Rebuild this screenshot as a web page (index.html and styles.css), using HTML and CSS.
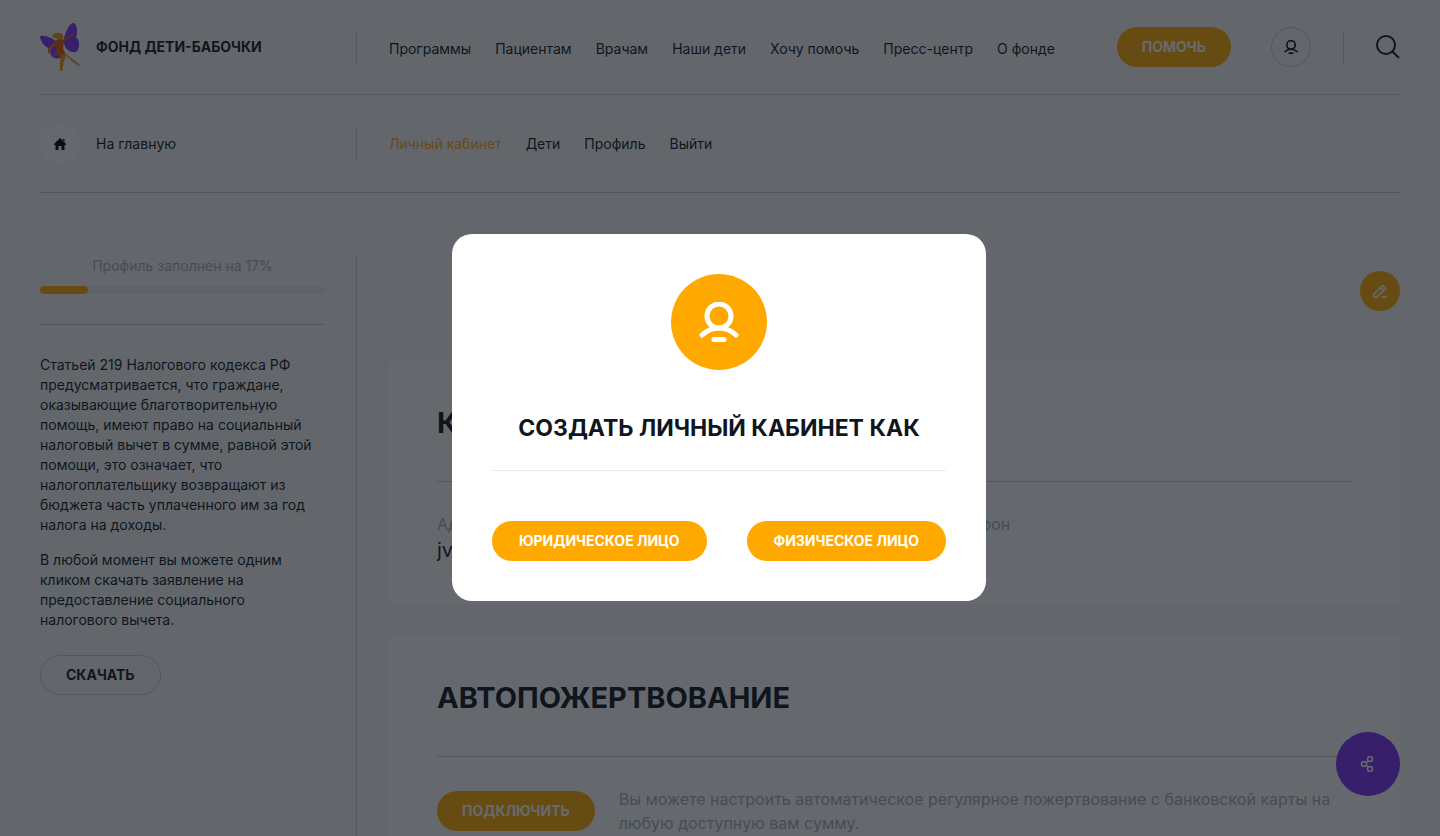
FILE: index.html
```html
<!DOCTYPE html>
<html lang="ru">
<head>
  <meta charset="UTF-8">
  <meta name="viewport" content="width=device-width, initial-scale=1.0">
  <title>Личный кабинет — Фонд Дети-бабочки</title>
  <link rel="stylesheet" href="styles.css">
</head>
<body>
  <!-- Shared user icon -->
  <svg class="sprite" aria-hidden="true">
    <symbol id="icon-user" viewBox="0 0 40 40">
      <circle cx="20" cy="14" r="12" />
      <path d="M3 33C13 23.500 27 23.500 37 33" />
      <path d="M15 37.500H25" />
    </symbol>
  </svg>

  <header class="header">
    <a href="#" class="logo">
      <svg class="logo-img" viewBox="0 0 120 144" aria-hidden="true">
        <path fill="#7f2ff3" d="M71 51C76 24 90 0 99 0C112 1 114 28 108 43C121 52 119 78 109 86C97 91 79 83 73 66Z" />
        <path fill="#7f2ff3" d="M0 40C11 34 40 45 51 59L29 76C14 75 0 52 0 40Z" />
        <path fill="#7f2ff3" d="M47 67C35 68 26 86 34 98C42 109 61 109 68 98L65 80Z" />
        <path fill="#e99a0b" d="M36 43C37 30 54 26 66 33C73 38 70 50 64 54L50 54C54 47 48 43 43 45Z" />
        <path fill="#e05c00" d="M46 53C54 49 66 50 72 56L69 75C70 82 76 87 77 95C66 100 54 99 42 98C42 90 52 84 50 76C48 72 42 69 40 66Z" />
        <path fill="none" stroke="#cc6510" stroke-width="6" stroke-linecap="round" stroke-linejoin="round" d="M67 55Q82 46 99 35M50 55Q39 65 28 76Q28 82 27 88" />
        <path fill="#e99a0b" d="M61 95L77 92Q98 108 120 125L117 129Q98 119 79 98C72 109 69 126 67 144H60C59 126 59 111 62 97Z" />
      </svg>
      <span class="logo-text">ФОНД ДЕТИ-БАБОЧКИ</span>
    </a>
    <nav class="nav nav-main">
      <a href="#">Программы</a>
      <a href="#">Пациентам</a>
      <a href="#">Врачам</a>
      <a href="#">Наши дети</a>
      <a href="#">Хочу помочь</a>
      <a href="#">Пресс-центр</a>
      <a href="#">О фонде</a>
    </nav>
    <div class="header-actions">
      <button type="button" class="btn">ПОМОЧЬ</button>
      <a href="#" class="user-link" aria-label="Личный кабинет">
        <svg class="user-icon"><use href="#icon-user" /></svg>
      </a>
      <div class="search">
        <button type="button" class="search-btn" aria-label="Поиск">
          <svg width="24" height="24" viewBox="0 0 24 24"><circle cx="10" cy="10" r="9" /><path d="M16.500 16.500L23 23" /></svg>
        </button>
      </div>
    </div>
  </header>

  <div class="subheader">
    <a href="#" class="home-link">
      <span class="home-icon">
        <svg width="12" height="12" viewBox="0 0 12 12"><path d="M6 0L12 6V7H10.500V12H7.500V8H4.500V12H1.500V7H0V6ZM8 1H10.500V4Z" /></svg>
      </span>
      На главную
    </a>
    <nav class="nav nav-account">
      <a href="#" class="active">Личный кабинет</a>
      <a href="#">Дети</a>
      <a href="#">Профиль</a>
      <a href="#">Выйти</a>
    </nav>
  </div>

  <div class="layout">
    <aside class="sidebar">
      <div class="profile">
        <label for="profileProgress">Профиль заполнен на 17%</label>
        <progress id="profileProgress" value="17" max="100"></progress>
      </div>
      <p>Статьей 219 Налогового кодекса РФ предусматривается, что граждане, оказывающие благотворительную помощь, имеют право на социальный налоговый вычет в сумме, равной этой помощи, это означает, что налогоплательщику возвращают из бюджета часть уплаченного им за год налога на доходы.</p>
      <p>В любой момент вы можете одним кликом скачать заявление на предоставление социального налогового вычета.</p>
      <button type="button" class="btn btn-outline">СКАЧАТЬ</button>
    </aside>

    <main class="content">
      <div class="content-top">
        <button type="button" class="edit-btn" aria-label="Редактировать">
          <svg width="14" height="14" viewBox="0 0 14 14"><path d="M1 13V10L9.500 1.500L12.500 4.500L4 13ZM7.500 3.500L10.500 6.500M8 13H14" /></svg>
        </button>
      </div>

      <section class="card">
        <h2>КОНТАКТЫ</h2>
        <dl class="contacts">
          <div>
            <dt>Адрес</dt>
            <dd>jv@mail.ru</dd>
          </div>
          <div>
            <dt>Моб. телефон</dt>
          </div>
        </dl>
      </section>

      <section class="card">
        <h2>АВТОПОЖЕРТВОВАНИЕ</h2>
        <div class="auto">
          <button type="button" class="btn">ПОДКЛЮЧИТЬ</button>
          <p>Вы можете настроить автоматическое регулярное пожертвование с банковской карты на любую доступную вам сумму.</p>
        </div>
      </section>
    </main>
  </div>

  <button type="button" class="share-btn" aria-label="Поделиться">
    <svg width="16" height="16" viewBox="0 0 16 16"><circle cx="4" cy="8" r="2.500" /><circle cx="10" cy="3" r="2.500" /><circle cx="10" cy="13" r="2.500" /><path d="M6 7L8.500 5M6 9L8.500 11" /></svg>
  </button>

  <div class="overlay">
    <div class="modal" role="dialog" aria-modal="true" aria-labelledby="modalTitle">
      <div class="modal-icon">
        <svg><use href="#icon-user" /></svg>
      </div>
      <h3 id="modalTitle">СОЗДАТЬ ЛИЧНЫЙ КАБИНЕТ КАК</h3>
      <div class="modal-buttons">
        <button type="button" class="btn">ЮРИДИЧЕСКОЕ ЛИЦО</button>
        <button type="button" class="btn">ФИЗИЧЕСКОЕ ЛИЦО</button>
      </div>
    </div>
  </div>
</body>
</html>
```
FILE: styles.css
```css
:root {
  --orange: #ffa800;
  --purple: #7f2ff3;
  --text: #10161d;
  --muted: #a6abb5;
  --line: #c8cccf;
  --background: #f5f6f7;
}

* {
  box-sizing: border-box;
}

body {
  margin: 0;
  padding: 0 40px;
  height: 100vh;
  overflow: hidden;
  background: var(--background);
  color: var(--text);
  font-family: Inter, "Liberation Sans", sans-serif;
  font-size: 14px;
  line-height: 20px;
}

a {
  color: inherit;
  text-decoration: none;
}

svg {
  display: block;
  flex: none;
}

.sprite {
  position: absolute;
  width: 0;
  height: 0;
}

/* Buttons */
button {
  font: inherit;
  cursor: pointer;
}

.btn {
  flex: none;
  height: 40px;
  padding: 0 25px;
  border: 0;
  border-radius: 20px;
  background: var(--orange);
  color: #fff;
  font-weight: 700;
  white-space: nowrap;
}

.btn-outline {
  border: 1px solid var(--line);
  background: none;
  color: var(--text);
}

/* Header */
.header,
.subheader {
  display: flex;
  align-items: center;
  border-bottom: 1px solid var(--line);
}

.header {
  height: 95px;
}

.logo,
.home-link {
  display: flex;
  align-items: center;
  gap: 16px;
  flex: 0 0 316px;
}

.logo-img {
  width: 40px;
  height: 48px;
}

.logo-text {
  font-weight: 700;
}

.nav {
  display: flex;
  align-items: center;
  gap: 24px;
  height: 32px;
  padding-left: 32px;
  border-left: 1px solid var(--line);
  white-space: nowrap;
}

.nav-main {
  padding-top: 4px;
}

.nav .active {
  color: var(--orange);
}

.header-actions {
  display: flex;
  align-items: center;
  margin-left: auto;
}

.user-link {
  display: flex;
  align-items: center;
  justify-content: center;
  width: 40px;
  height: 40px;
  margin: 0 32px 0 40px;
  border: 1px solid var(--line);
  border-radius: 50%;
}

.user-icon {
  width: 14px;
  height: 14px;
  fill: none;
  stroke: var(--text);
  stroke-width: 5;
  stroke-linecap: round;
}

.search {
  display: flex;
  align-items: center;
  height: 32px;
  padding-left: 32px;
  border-left: 1px solid var(--line);
}

.search-btn {
  padding: 0;
  border: 0;
  background: none;
}

.search-btn svg {
  fill: none;
  stroke: var(--text);
  stroke-width: 2;
}

.subheader {
  height: 98px;
}

.home-icon {
  display: flex;
  align-items: center;
  justify-content: center;
  width: 40px;
  height: 40px;
  border-radius: 50%;
  background: #fcfcfc;
}

/* Page */
.layout {
  display: flex;
  margin-top: 63px;
}

.sidebar {
  flex: 0 0 316px;
  padding-right: 31px;
}

.sidebar p {
  margin: 0 0 15px;
}

.sidebar .btn {
  margin-top: 10px;
}

.profile {
  margin-bottom: 30px;
  padding-bottom: 30px;
  border-bottom: 1px solid var(--line);
  color: var(--muted);
  text-align: center;
}

.profile label {
  display: block;
  margin-bottom: 10px;
}

.profile progress {
  display: block;
  width: 100%;
  height: 8px;
  border: 0;
  border-radius: 4px;
  background: #eaebec;
  overflow: hidden;
  appearance: none;
}

.profile progress::-webkit-progress-bar {
  background: #eaebec;
}

.profile progress::-webkit-progress-value {
  border-radius: 4px;
  background: var(--orange);
}

.content {
  flex: 1;
  padding: 15px 0 40px 32px;
  border-left: 1px solid var(--line);
}

.content-top {
  display: flex;
  justify-content: flex-end;
  margin-bottom: 50px;
}

.edit-btn {
  display: flex;
  align-items: center;
  justify-content: center;
  width: 40px;
  height: 40px;
  padding: 0;
  border: 0;
  border-radius: 50%;
  background: var(--orange);
}

.edit-btn svg,
.share-btn svg {
  fill: none;
  stroke: #fff;
  stroke-width: 1.5;
}

.card {
  margin-bottom: 32px;
  padding: 40px 48px;
  background: #fcfcfc;
}

.card h2 {
  margin: 0 0 30px;
  padding-bottom: 36px;
  border-bottom: 1px solid var(--line);
  font-size: 29px;
  line-height: 44px;
}

.contacts {
  display: grid;
  grid-template-columns: 1fr 1fr;
  gap: 16px;
  margin: 0;
}

.contacts dt {
  color: var(--muted);
  font-size: 16px;
  line-height: 24px;
}

.contacts dd {
  margin: 0;
  font-size: 20px;
  line-height: 28px;
}

.auto {
  display: flex;
  align-items: center;
  gap: 24px;
}

.auto p {
  margin: 0;
  color: var(--muted);
  font-size: 16px;
  line-height: 24px;
}

.share-btn {
  position: fixed;
  right: 40px;
  bottom: 40px;
  display: flex;
  align-items: center;
  justify-content: center;
  width: 64px;
  height: 64px;
  padding: 0;
  border: 0;
  border-radius: 50%;
  background: var(--purple);
}

/* Modal */
.overlay {
  position: fixed;
  inset: 0;
  display: flex;
  align-items: center;
  justify-content: center;
  padding: 0 2px 2px 0;
  background: rgba(16, 22, 29, 0.64);
}

.modal {
  width: 534px;
  padding: 40px;
  border-radius: 20px;
  background: #fff;
}

.modal-icon {
  display: flex;
  align-items: center;
  justify-content: center;
  width: 96px;
  height: 96px;
  margin: 0 auto 42px;
  border-radius: 50%;
  background: var(--orange);
}

.modal-icon svg {
  width: 40px;
  height: 40px;
  fill: none;
  stroke: #fff;
  stroke-width: 5;
  stroke-linecap: round;
}

.modal h3 {
  margin: 0 0 50px;
  padding-bottom: 26px;
  border-bottom: 1px solid #eaebec;
  font-size: 23px;
  line-height: 32px;
  text-align: center;
  white-space: nowrap;
}

.modal-buttons {
  display: flex;
  gap: 40px;
}

.modal-buttons .btn {
  flex: 1 1 auto;
}
```
